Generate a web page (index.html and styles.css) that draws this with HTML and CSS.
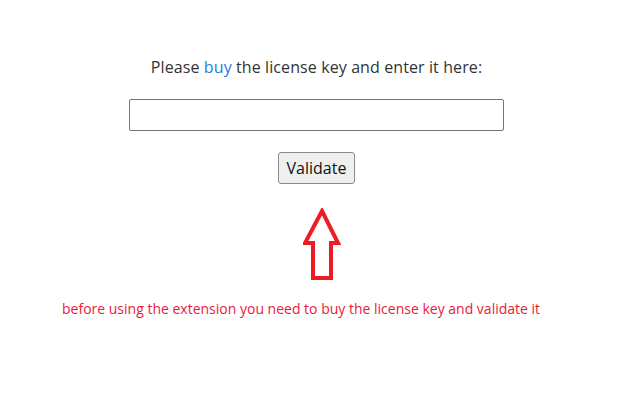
FILE: index.html
```html
<!DOCTYPE html>
<html>
<head>
<meta charset="utf-8">
<link rel="stylesheet" href="styles.css">
</head>
<body>
<main class="page">
  <p class="prompt">Please <a class="buy" href="#">buy</a> the license key and enter it here:</p>
  <input class="key" type="text">
  <button class="validate">Validate</button>
  <svg class="arrow" width="40" height="74" viewBox="0 0 40 74">
    <path d="M19 3 L35 35 L28 35 L28 70 L10 70 L10 35 L2 35 Z" fill="none" stroke="#ed1c24" stroke-width="4" stroke-linejoin="miter"/>
  </svg>
  <p class="note">before using the extension you need to buy the license key and validate it</p>
</main>
</body>
</html>
```
FILE: styles.css
```css
html, body {
  margin: 0;
  padding: 0;
  background: #fff;
}
.page {
  width: 633px;
  height: 400px;
  display: flex;
  flex-direction: column;
  align-items: center;
  font-family: "Open Sans", "Noto Sans", sans-serif;
}
.prompt {
  margin: 56px 0 0 0;
  font-size: 16px;
  line-height: 22px;
  letter-spacing: 0.1px;
  color: #333;
}
.buy {
  color: #2a7ae2;
  text-decoration: none;
}
.key {
  margin-top: 21px;
  width: 375px;
  height: 32px;
  box-sizing: border-box;
  border: 1px solid #767676;
  border-radius: 2px;
  background: #fff;
}
.validate {
  margin-top: 21px;
  width: 77px;
  height: 32px;
  box-sizing: border-box;
  border: 1px solid #8a8a8a;
  border-radius: 3px;
  background: #efefef;
  font-family: "Open Sans", "Noto Sans", sans-serif;
  font-size: 16px;
  color: #111;
  padding: 0;
}
.arrow {
  margin-top: 24px;
  margin-left: 13px;
  display: block;
}
.note {
  align-self: flex-start;
  margin: 18px 0 0 62px;
  font-size: 14px;
  line-height: 18px;
  color: #e8193c;
}
```
